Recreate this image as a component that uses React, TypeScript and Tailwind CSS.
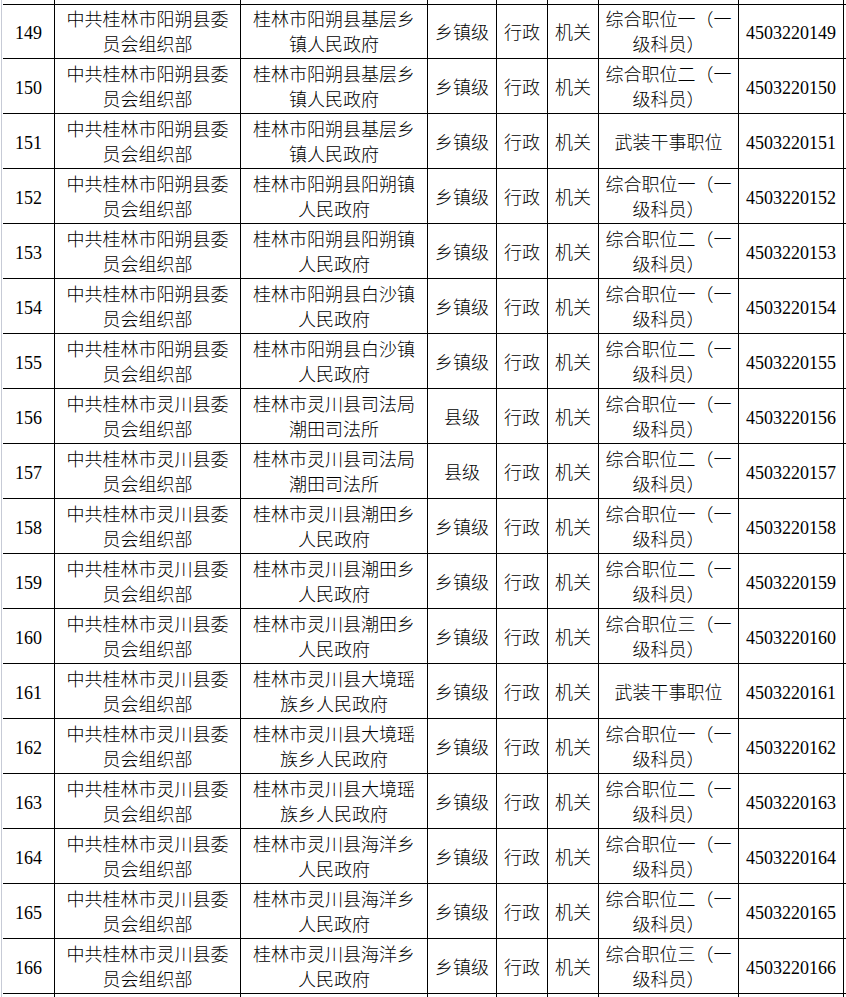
const cols = "grid grid-cols-[52px_186px_187px_69px_51px_51px_140px_105px_1fr]";

type Row = {
  no: number;
  dept: [string, string];
  unit: [string, string];
  level: string;
  kind: string;
  post: string;
  code: string;
};

const yangshuo: [string, string] = ["中共桂林市阳朔县委", "员会组织部"];
const lingchuan: [string, string] = ["中共桂林市灵川县委", "员会组织部"];

const rows: Row[] = [
  { no: 149, dept: yangshuo, unit: ["桂林市阳朔县基层乡", "镇人民政府"], level: "乡镇级", kind: "行政", post: "综合职位一（一级科员）", code: "4503220149" },
  { no: 150, dept: yangshuo, unit: ["桂林市阳朔县基层乡", "镇人民政府"], level: "乡镇级", kind: "行政", post: "综合职位二（一级科员）", code: "4503220150" },
  { no: 151, dept: yangshuo, unit: ["桂林市阳朔县基层乡", "镇人民政府"], level: "乡镇级", kind: "行政", post: "武装干事职位", code: "4503220151" },
  { no: 152, dept: yangshuo, unit: ["桂林市阳朔县阳朔镇", "人民政府"], level: "乡镇级", kind: "行政", post: "综合职位一（一级科员）", code: "4503220152" },
  { no: 153, dept: yangshuo, unit: ["桂林市阳朔县阳朔镇", "人民政府"], level: "乡镇级", kind: "行政", post: "综合职位二（一级科员）", code: "4503220153" },
  { no: 154, dept: yangshuo, unit: ["桂林市阳朔县白沙镇", "人民政府"], level: "乡镇级", kind: "行政", post: "综合职位一（一级科员）", code: "4503220154" },
  { no: 155, dept: yangshuo, unit: ["桂林市阳朔县白沙镇", "人民政府"], level: "乡镇级", kind: "行政", post: "综合职位二（一级科员）", code: "4503220155" },
  { no: 156, dept: lingchuan, unit: ["桂林市灵川县司法局", "潮田司法所"], level: "县级", kind: "行政", post: "综合职位一（一级科员）", code: "4503220156" },
  { no: 157, dept: lingchuan, unit: ["桂林市灵川县司法局", "潮田司法所"], level: "县级", kind: "行政", post: "综合职位二（一级科员）", code: "4503220157" },
  { no: 158, dept: lingchuan, unit: ["桂林市灵川县潮田乡", "人民政府"], level: "乡镇级", kind: "行政", post: "综合职位一（一级科员）", code: "4503220158" },
  { no: 159, dept: lingchuan, unit: ["桂林市灵川县潮田乡", "人民政府"], level: "乡镇级", kind: "行政", post: "综合职位二（一级科员）", code: "4503220159" },
  { no: 160, dept: lingchuan, unit: ["桂林市灵川县潮田乡", "人民政府"], level: "乡镇级", kind: "行政", post: "综合职位三（一级科员）", code: "4503220160" },
  { no: 161, dept: lingchuan, unit: ["桂林市灵川县大境瑶", "族乡人民政府"], level: "乡镇级", kind: "行政", post: "武装干事职位", code: "4503220161" },
  { no: 162, dept: lingchuan, unit: ["桂林市灵川县大境瑶", "族乡人民政府"], level: "乡镇级", kind: "行政", post: "综合职位一（一级科员）", code: "4503220162" },
  { no: 163, dept: lingchuan, unit: ["桂林市灵川县大境瑶", "族乡人民政府"], level: "乡镇级", kind: "行政", post: "综合职位二（一级科员）", code: "4503220163" },
  { no: 164, dept: lingchuan, unit: ["桂林市灵川县海洋乡", "人民政府"], level: "乡镇级", kind: "行政", post: "综合职位一（一级科员）", code: "4503220164" },
  { no: 165, dept: lingchuan, unit: ["桂林市灵川县海洋乡", "人民政府"], level: "乡镇级", kind: "行政", post: "综合职位二（一级科员）", code: "4503220165" },
  { no: 166, dept: lingchuan, unit: ["桂林市灵川县海洋乡", "人民政府"], level: "乡镇级", kind: "行政", post: "综合职位三（一级科员）", code: "4503220166" },
];

function Cell({ children, last }: { children?: React.ReactNode; last?: boolean }) {
  return (
    <div
      className={
        "flex flex-col items-center justify-center text-center pt-1 border-b border-black overflow-hidden " +
        (last ? "" : "border-r")
      }
    >
      {children}
    </div>
  );
}

function Lines({ lines }: { lines: string[] }) {
  return (
    <>
      {lines.map((l, i) => (
        <span key={i} className="block whitespace-nowrap">
          {l}
        </span>
      ))}
    </>
  );
}

function EmptyRow({ h }: { h: string }) {
  return (
    <div className={`${cols} ${h}`}>
      {Array.from({ length: 8 }).map((_, i) => (
        <Cell key={i} />
      ))}
      <Cell last />
    </div>
  );
}

export default function App() {
  return (
    <div className="w-[846px] h-[997px] overflow-hidden bg-white flex">
      <div className="w-[2px] border-l border-[#c7cbd6] shrink-0 ml-px" />
      <div className="flex-1 text-[18px] leading-[25px] text-black font-light font-['Liberation_Serif','Noto_Sans_CJK_SC',serif]">
        <EmptyRow h="h-[4px]" />
        {rows.map((r) => {
          const post = r.post.length > 7 ? [r.post.slice(0, 7), r.post.slice(7)] : [r.post];
          return (
            <div key={r.no} className={`${cols} h-[55px]`}>
              <Cell>{r.no}</Cell>
              <Cell>
                <Lines lines={r.dept} />
              </Cell>
              <Cell>
                <Lines lines={r.unit} />
              </Cell>
              <Cell>{r.level}</Cell>
              <Cell>{r.kind}</Cell>
              <Cell>机关</Cell>
              <Cell>
                <Lines lines={post} />
              </Cell>
              <Cell>{r.code}</Cell>
              <Cell last />
            </div>
          );
        })}
        <EmptyRow h="h-[10px]" />
      </div>
    </div>
  );
}
